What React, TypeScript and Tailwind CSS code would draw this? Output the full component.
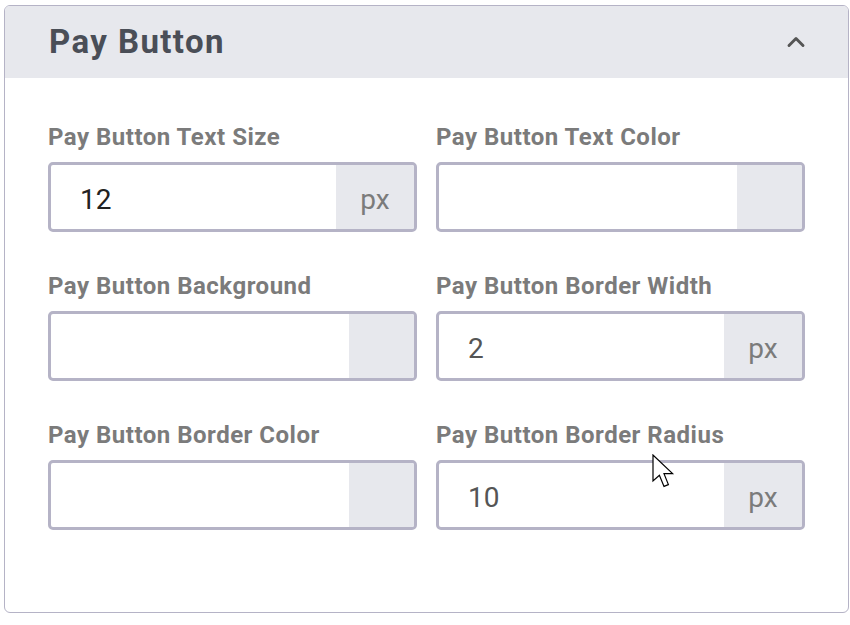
import { ChevronUp } from "lucide-react";

type Field = {
  label: string;
  value?: string;
  kind: "unit" | "color";
  muted?: boolean;
};

const fields: Field[] = [
  { label: "Pay Button Text Size", value: "12", kind: "unit" },
  { label: "Pay Button Text Color", kind: "color" },
  { label: "Pay Button Background", kind: "color" },
  { label: "Pay Button Border Width", value: "2", kind: "unit", muted: true },
  { label: "Pay Button Border Color", kind: "color" },
  { label: "Pay Button Border Radius", value: "10", kind: "unit", muted: true },
];

function MouseCursor() {
  return (
    <svg width="26" height="36" viewBox="0 0 13 18" className="absolute left-[652px] top-[454px] pointer-events-none">
      <path
        d="M0.5 0.5 L0.5 13.5 L3.7 10.6 L6 16.2 L8.2 15.3 L6 9.8 L10.3 9.8 Z"
        fill="#fff"
        stroke="#000"
        strokeWidth="0.6"
        strokeLinejoin="miter"
      />
    </svg>
  );
}

function FieldBox({ field }: { field: Field }) {
  return (
    <div className="flex flex-col">
      <label className="text-[24px] leading-[26px] font-bold tracking-[0.5px] text-[#7b7b7b] mb-[12px] whitespace-nowrap">
        {field.label}
      </label>
      <div className="flex h-[70px] border-[3px] border-[#b5b3c6] rounded-[5px] overflow-hidden bg-white">
        <div
          className={`flex-1 flex items-center pl-[29px] pt-[5px] text-[28px] ${
            field.muted ? "text-[#555]" : "text-[#222]"
          }`}
        >
          {field.value}
        </div>
        {field.kind === "unit" ? (
          <div className="w-[78px] bg-[#e7e8ed] flex items-center justify-center pt-[5px] text-[28px] text-[#7b7b7b]">
            px
          </div>
        ) : (
          <div className="w-[65px] bg-[#e7e8ed]" />
        )}
      </div>
    </div>
  );
}

export default function App() {
  return (
    <div className="relative w-[850px] h-[625px] bg-white pl-[4px] pt-[5px] font-['Roboto',sans-serif]">
      <div className="w-[845px] h-[608px] border border-[#b5b3c6] rounded-[6px] overflow-hidden">
        <div className="h-[72px] bg-[#e7e8ed] flex items-center justify-between pl-[44px] pr-[38px]">
          <h2 className="text-[33px] font-bold tracking-[1.4px] text-[#4a4e57]">Pay Button</h2>
          <ChevronUp size={28} strokeWidth={2.5} className="text-[#555]" />
        </div>
        <div className="grid grid-cols-2 gap-x-[19px] gap-y-[41px] px-[43px] pt-[46px]">
          {fields.map((f) => (
            <FieldBox key={f.label} field={f} />
          ))}
        </div>
      </div>
      <MouseCursor />
    </div>
  );
}
